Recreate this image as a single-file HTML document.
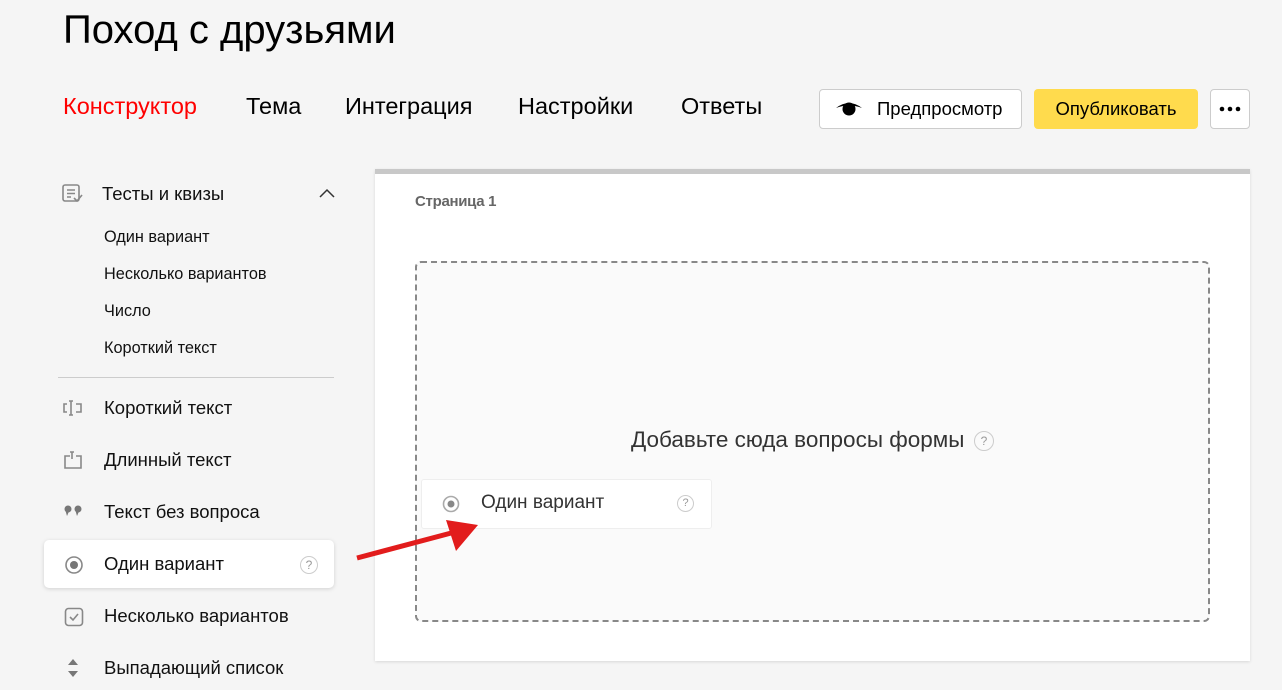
<!DOCTYPE html>
<html><head><meta charset="utf-8"><style>
*{margin:0;padding:0;box-sizing:border-box}
body{width:1282px;height:690px;overflow:hidden;background:#f5f5f5;font-family:"Liberation Sans","Noto Sans CJK SC",sans-serif;color:#000;position:relative}
.a{position:absolute;white-space:nowrap}
h1{position:absolute;left:63px;top:8px;font-size:40px;font-weight:normal;color:#000}
.tab{position:absolute;top:93px;font-size:23.5px}
.btn{position:absolute;top:89px;height:40px;border-radius:4px;font-size:18px;display:flex;align-items:center}
.side{font-size:18.5px;color:#111}
.sub{font-size:16.3px;color:#111}
.q{display:inline-block;width:18px;height:18px;border:1px solid #ccc;border-radius:50%;font-size:12px;color:#999;text-align:center;line-height:16px}
</style></head><body>
<h1>Поход с друзьями</h1>
<div class="tab" style="left:63px;color:#f00">Конструктор</div>
<div class="tab" style="left:246px">Тема</div>
<div class="tab" style="left:345px">Интеграция</div>
<div class="tab" style="left:518px">Настройки</div>
<div class="tab" style="left:681px">Ответы</div>
<div class="btn" style="left:819px;width:203px;background:#fff;border:1px solid #ccc;padding-left:15px">
<svg width="28" height="18" viewBox="0 0 28 18"><path d="M1 8 Q14 -2 27 8 Q14 3 1 8Z" fill="#000"/><circle cx="14" cy="9" r="6.5" fill="#000"/></svg>
<span style="margin-left:14px;font-size:18.5px">Предпросмотр</span></div>
<div class="btn" style="left:1034px;width:164px;background:#ffdb4d;justify-content:center;font-size:18.5px">Опубликовать</div>
<div class="btn" style="left:1210px;width:40px;background:#fff;border:1px solid #ccc;justify-content:center">
<svg width="22" height="6"><circle cx="3" cy="3" r="2.3"/><circle cx="11" cy="3" r="2.3"/><circle cx="19" cy="3" r="2.3"/></svg></div>

<svg class="a" style="left:62px;top:184px" width="22" height="20" viewBox="0 0 22 20" fill="none" stroke="#888" stroke-width="1.6"><rect x="1" y="1" width="16" height="16" rx="2"/><path d="M5 6h8M5 9.5h8M5 13h4M12 14l3 3 5-6"/></svg>
<div class="a side" style="left:102px;top:183px">Тесты и квизы</div>
<svg class="a" style="left:318px;top:187px" width="18" height="12"><path d="M2 10 L9 3 L16 10" fill="none" stroke="#333" stroke-width="1.5"/></svg>
<div class="a sub" style="left:104px;top:228px">Один вариант</div>
<div class="a sub" style="left:104px;top:265px">Несколько вариантов</div>
<div class="a sub" style="left:104px;top:302px">Число</div>
<div class="a sub" style="left:104px;top:339px">Короткий текст</div>
<div class="a" style="left:58px;top:377px;width:276px;height:1px;background:#ccc"></div>

<svg class="a" style="left:63px;top:400px" width="20" height="16" fill="none" stroke="#888" stroke-width="1.6"><path d="M4 4H1v8h3M13 4h5v8h-5M8 1v14M6 1h4M6 15h4"/></svg>
<div class="a side" style="left:104px;top:397px">Короткий текст</div>
<svg class="a" style="left:64px;top:451px" width="20" height="18" fill="none" stroke="#888" stroke-width="1.6"><path d="M6 5H1v12h16V5h-5M8 1v7M6 1h4"/></svg>
<div class="a side" style="left:104px;top:449px">Длинный текст</div>
<svg class="a" style="left:64px;top:505px" width="20" height="12" fill="#777"><circle cx="4" cy="4" r="3.5"/><path d="M1 4 L3 11 L6 4Z"/><circle cx="14" cy="4" r="3.5"/><path d="M11 4 L13 11 L16 4Z"/></svg>
<div class="a side" style="left:104px;top:501px">Текст без вопроса</div>
<div class="a" style="left:44px;top:540px;width:290px;height:48px;background:#fff;border-radius:5px;box-shadow:0 1px 4px rgba(0,0,0,.15)"></div>
<svg class="a" style="left:64px;top:555px" width="20" height="20"><circle cx="10" cy="10" r="8" fill="none" stroke="#888" stroke-width="1.6"/><circle cx="10" cy="10" r="4" fill="#777"/></svg>
<div class="a side" style="left:104px;top:553px">Один вариант</div>
<span class="a q" style="left:300px;top:556px">?</span>
<svg class="a" style="left:64px;top:607px" width="20" height="20" fill="none" stroke="#888" stroke-width="1.6"><rect x="1.5" y="1.5" width="17" height="17" rx="3"/><path d="M6 10l3 3 5-6"/></svg>
<div class="a side" style="left:104px;top:605px">Несколько вариантов</div>
<svg class="a" style="left:66px;top:658px" width="14" height="20" fill="#777"><path d="M7 1L12 7H2Z M7 19L12 13H2Z"/></svg>
<div class="a side" style="left:104px;top:657px">Выпадающий список</div>

<div class="a" style="left:375px;top:169px;width:875px;height:492px;background:#fff;border-top:5px solid #c8c8c8;box-shadow:0 1px 3px rgba(0,0,0,.12)"></div>
<div class="a" style="left:415px;top:193px;font-size:15px;color:#666;font-weight:bold;letter-spacing:-0.3px">Страница 1</div>
<div class="a" style="left:415px;top:261px;width:795px;height:361px;border:2px dashed #888;border-radius:6px;background:#fafafa"></div>
<div class="a" style="left:631px;top:427px;font-size:22.5px;color:#333">Добавьте сюда вопросы формы</div>
<span class="a q" style="left:974px;top:431px;width:20px;height:20px;line-height:18px">?</span>
<div class="a" style="left:421px;top:479px;width:291px;height:50px;background:#fff;border:1px solid #eee;border-radius:3px"></div>
<svg class="a" style="left:441px;top:494px" width="20" height="20"><circle cx="10" cy="10" r="7.5" fill="none" stroke="#aaa" stroke-width="1.6"/><circle cx="10" cy="10" r="3.5" fill="#888"/></svg>
<div class="a" style="left:481px;top:492px;font-size:19px;color:#333">Один вариант</div>
<span class="a q" style="left:677px;top:495px;width:17px;height:17px;line-height:15px;font-size:11px">?</span>
<svg class="a" style="left:350px;top:510px" width="140" height="60"><path d="M7 48 L105 22" stroke="#e21c1c" stroke-width="5"/><path d="M128 15 L96 10 L106 41Z" fill="#e21c1c"/></svg>
</body></html>
